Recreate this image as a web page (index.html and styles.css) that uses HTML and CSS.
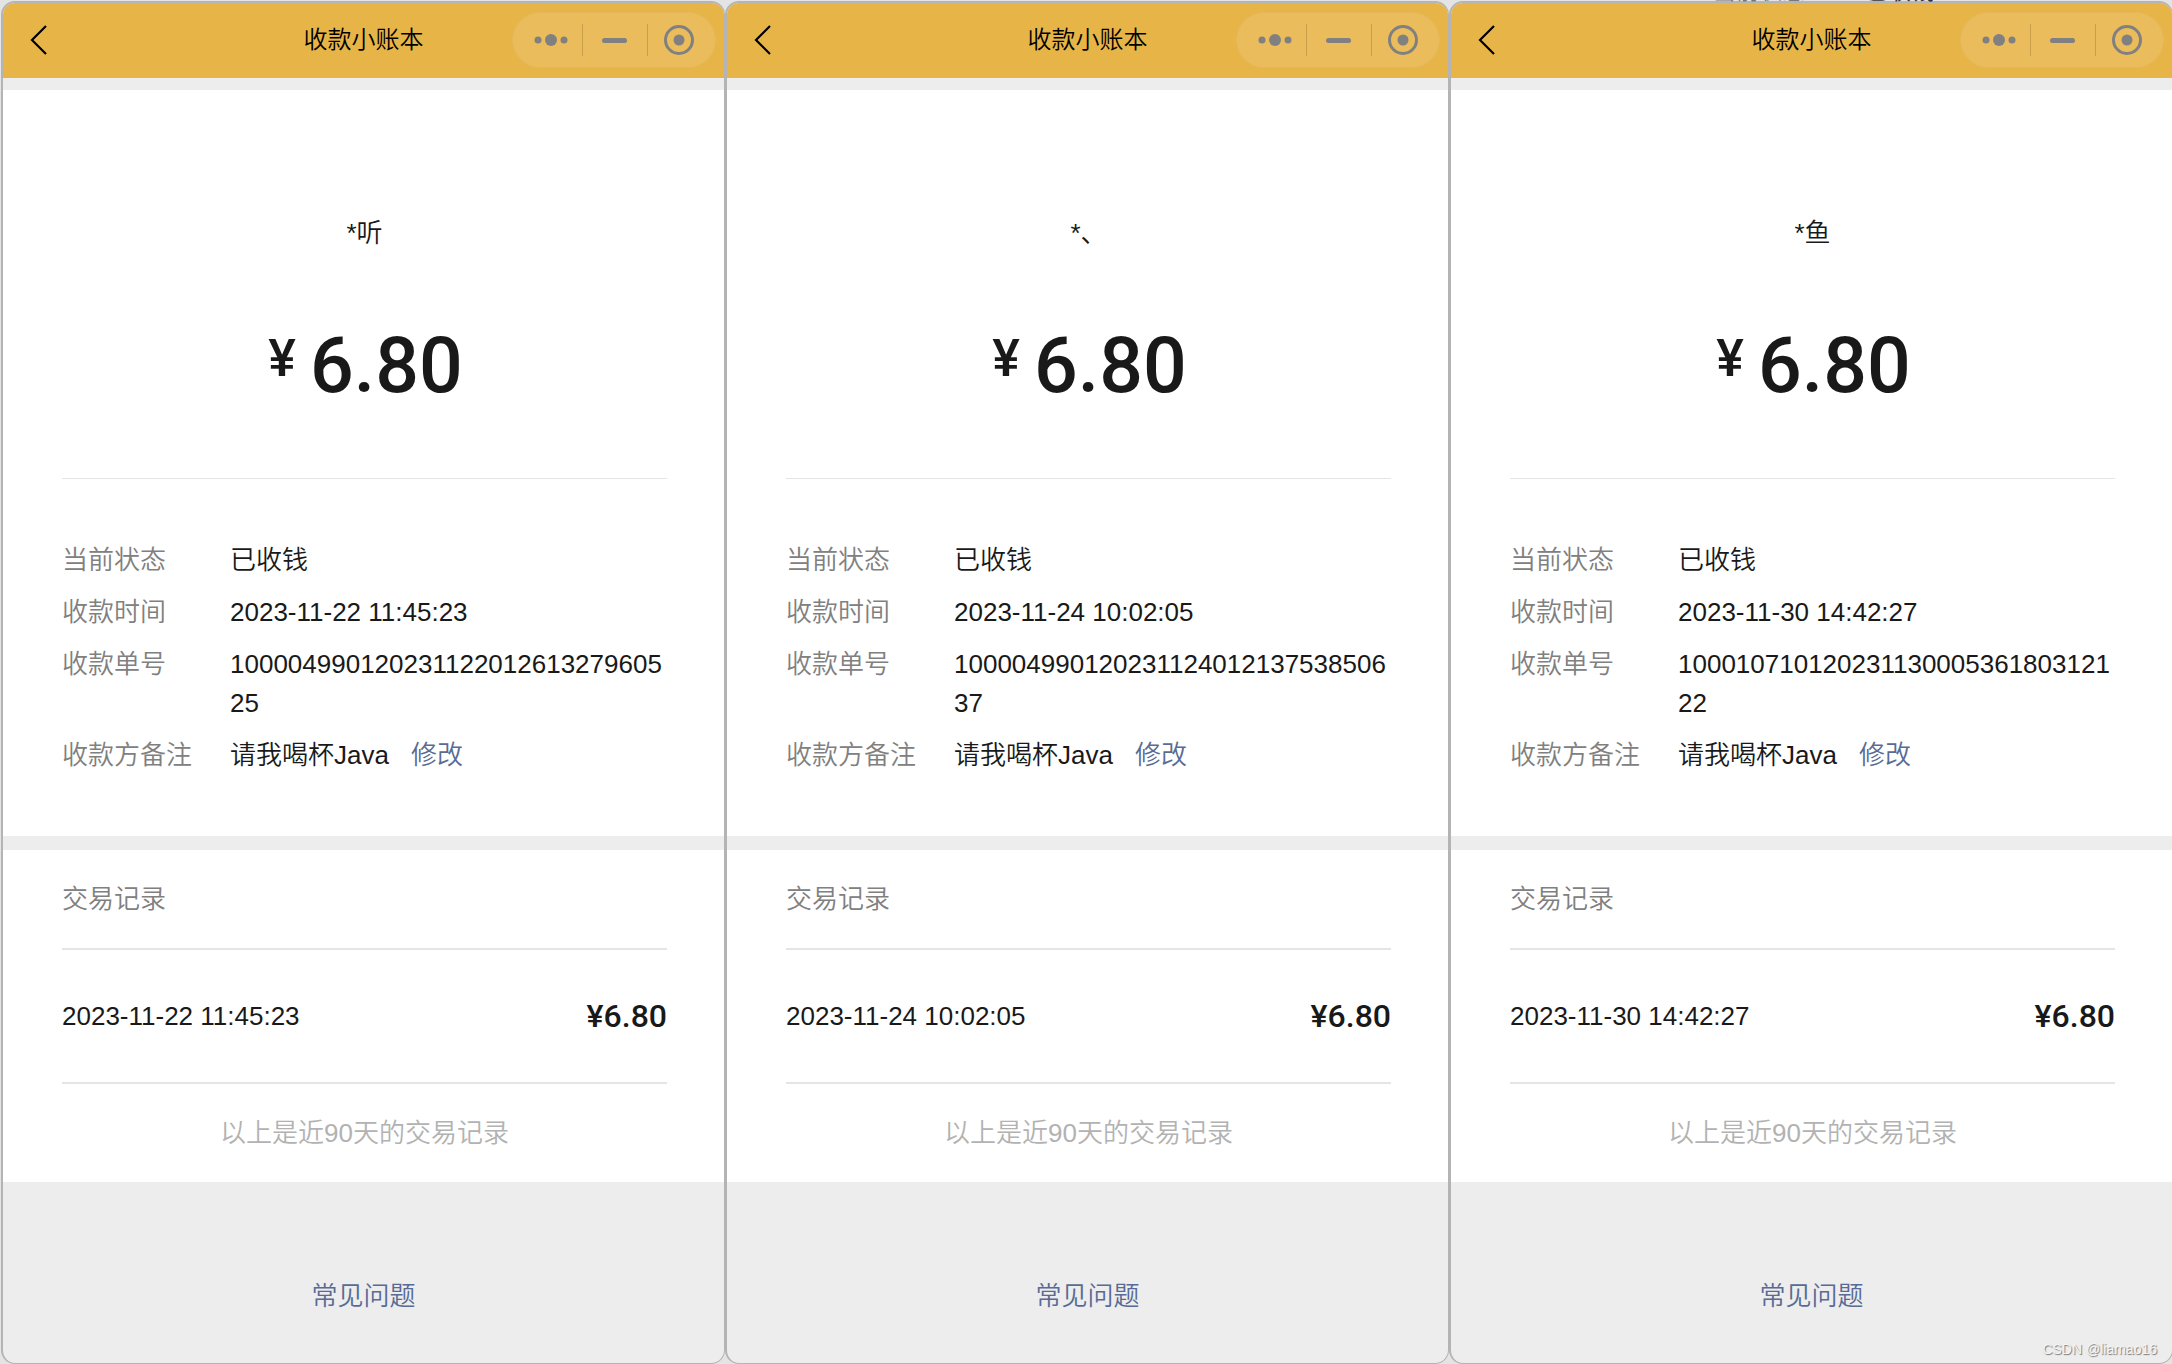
FILE: index.html
```html
<!DOCTYPE html>
<html lang="zh-CN">
<head>
<meta charset="utf-8">
<title>收款小账本</title>
<link rel="stylesheet" href="styles.css">
</head>
<body>
<svg class="symbols" aria-hidden="true">
  <symbol id="back" viewBox="0 0 20 32"><path d="M17 2 3 16 17 30" fill="none" stroke="#000" stroke-width="2.2"/></symbol>
  <symbol id="more" viewBox="0 0 34 32"><g fill="#808080"><circle cx="4" cy="16" r="3.5"/><circle cx="17" cy="16" r="6"/><circle cx="30" cy="16" r="3.5"/></g></symbol>
  <symbol id="minus" viewBox="0 0 34 32"><rect x="4" y="14" width="25" height="5" rx="2.5" fill="#808080"/></symbol>
  <symbol id="close" viewBox="0 0 34 32"><circle cx="16" cy="16" r="13.5" fill="none" stroke="#808080" stroke-width="3"/><circle cx="16" cy="16" r="5.5" fill="#808080"/></symbol>
</svg>
<main class="board">
  <article class="phone">
    <header class="bar">
      <button class="back" type="button" aria-label="返回"><svg><use href="#back"/></svg></button>
      <h1 class="title">收款小账本</h1>
      <div class="capsule">
        <button type="button" aria-label="更多"><svg><use href="#more"/></svg></button>
        <button type="button" aria-label="最小化"><svg><use href="#minus"/></svg></button>
        <button type="button" aria-label="关闭"><svg><use href="#close"/></svg></button>
      </div>
    </header>
    <section class="detail">
      <p class="payer">*听</p>
      <p class="amount"><span class="yen">¥</span><span>6.80</span></p>
      <dl class="facts">
        <dt>当前状态</dt><dd>已收钱</dd>
        <dt>收款时间</dt><dd>2023-11-22 11:45:23</dd>
        <dt>收款单号</dt><dd>10000499012023112201261327960525</dd>
        <dt>收款方备注</dt><dd>请我喝杯Java<a class="edit" href="#edit">修改</a></dd>
      </dl>
    </section>
    <section class="records">
      <h2 class="heading">交易记录</h2>
      <p class="record"><time>2023-11-22 11:45:23</time><span class="sum">¥6.80</span></p>
      <p class="note">以上是近90天的交易记录</p>
    </section>
    <footer class="foot"><a href="#faq">常见问题</a></footer>
  </article>
  <article class="phone">
    <header class="bar">
      <button class="back" type="button" aria-label="返回"><svg><use href="#back"/></svg></button>
      <h1 class="title">收款小账本</h1>
      <div class="capsule">
        <button type="button" aria-label="更多"><svg><use href="#more"/></svg></button>
        <button type="button" aria-label="最小化"><svg><use href="#minus"/></svg></button>
        <button type="button" aria-label="关闭"><svg><use href="#close"/></svg></button>
      </div>
    </header>
    <section class="detail">
      <p class="payer">*、</p>
      <p class="amount"><span class="yen">¥</span><span>6.80</span></p>
      <dl class="facts">
        <dt>当前状态</dt><dd>已收钱</dd>
        <dt>收款时间</dt><dd>2023-11-24 10:02:05</dd>
        <dt>收款单号</dt><dd>10000499012023112401213753850637</dd>
        <dt>收款方备注</dt><dd>请我喝杯Java<a class="edit" href="#edit">修改</a></dd>
      </dl>
    </section>
    <section class="records">
      <h2 class="heading">交易记录</h2>
      <p class="record"><time>2023-11-24 10:02:05</time><span class="sum">¥6.80</span></p>
      <p class="note">以上是近90天的交易记录</p>
    </section>
    <footer class="foot"><a href="#faq">常见问题</a></footer>
  </article>
  <article class="phone">
    <header class="bar">
      <button class="back" type="button" aria-label="返回"><svg><use href="#back"/></svg></button>
      <h1 class="title">收款小账本</h1>
      <div class="capsule">
        <button type="button" aria-label="更多"><svg><use href="#more"/></svg></button>
        <button type="button" aria-label="最小化"><svg><use href="#minus"/></svg></button>
        <button type="button" aria-label="关闭"><svg><use href="#close"/></svg></button>
      </div>
    </header>
    <section class="detail">
      <p class="payer">*鱼</p>
      <p class="amount"><span class="yen">¥</span><span>6.80</span></p>
      <dl class="facts">
        <dt>当前状态</dt><dd>已收钱</dd>
        <dt>收款时间</dt><dd>2023-11-30 14:42:27</dd>
        <dt>收款单号</dt><dd>10001071012023113000536180312122</dd>
        <dt>收款方备注</dt><dd>请我喝杯Java<a class="edit" href="#edit">修改</a></dd>
      </dl>
    </section>
    <section class="records">
      <h2 class="heading">交易记录</h2>
      <p class="record"><time>2023-11-30 14:42:27</time><span class="sum">¥6.80</span></p>
      <p class="note">以上是近90天的交易记录</p>
    </section>
    <footer class="foot"><a href="#faq">常见问题</a></footer>
  </article>
</main>
<div class="behind" aria-hidden="true"><span>当前状态</span><b>已收钱</b></div>
<p class="watermark">CSDN @liamao16</p>
</body>
</html>
```
FILE: styles.css
```css
* { box-sizing: border-box; margin: 0; padding: 0; }

html { overflow-x: clip; }

body {
  background: #e4e4e4;
  color: #191919;
  font: 350 26px/39px "Liberation Sans", "Noto Sans CJK SC", sans-serif;
}

a { color: #576b95; text-decoration: none; }
button { border: 0; background: none; font: inherit; }
.symbols { display: none; }

.board {
  display: grid;
  grid-template-columns: repeat(3, 1fr);
  min-height: 100vh;
  margin-right: -1px;
  padding: 1px 0 0 1px;
}

.phone {
  display: flex;
  flex-direction: column;
  overflow: hidden;
  border: 2px solid #b4b4b4;
  border-right-width: 1px;
  border-bottom-width: 1px;
  border-radius: 14px;
  background: #ededed;
}

.bar {
  display: grid;
  grid-template-columns: 1fr auto 1fr;
  align-items: center;
  height: 75px;
  padding: 0 8px 2px 26px;
  background: #e7b547;
}

.back { justify-self: start; width: 20px; height: 32px; }
.back svg { display: block; width: 20px; height: 32px; }
.title { padding-right: 18px; font-size: 24px; font-weight: 350; color: #000; }

.capsule {
  display: flex;
  align-items: center;
  justify-self: end;
  width: 204px;
  height: 56px;
  border: 1px solid #e4b85a;
  border-radius: 28px;
  background: #eabc5b;
}
.capsule button { display: flex; justify-content: center; width: 65px; height: 32px; }
.capsule button:first-child { width: 69px; padding-left: 6px; }
.capsule button + button { border-left: 1px solid #c9a04a; }
.capsule svg { width: 34px; height: 32px; }

.detail {
  margin-top: 12px;
  padding: 124px 57px 61px 59px;
  background: #fff;
}

.payer { text-align: center; }

.amount {
  display: flex;
  justify-content: center;
  gap: 14px;
  height: 226px;
  padding: 66px 0 0 2px;
  border-bottom: 1px solid #e5e5e5;
  font: 500 77px/94px Roboto, sans-serif;
}
.yen { font-size: 52px; line-height: 80px; }

.facts {
  display: grid;
  grid-template-columns: 144px 1fr;
  gap: 13px 24px;
  padding-top: 62px;
}
.facts dt { color: #808080; white-space: nowrap; }
.facts dd { word-break: break-all; }
.edit { margin-left: 22px; }

.records {
  margin-top: 14px;
  padding: 0 57px 0 59px;
  background: #fff;
}
.heading { padding: 30px 0 29px; font-size: 26px; font-weight: 350; color: #808080; }
.record {
  display: flex;
  align-items: center;
  justify-content: space-between;
  height: 136px;
  border: solid #e5e5e5;
  border-width: 2px 0;
}
.sum { font: 500 32px/39px Roboto, sans-serif; }
.note { padding: 30px 0 29px; text-align: center; color: #b2b2b2; }

.foot { padding: 95px 0 40px; text-align: center; }

/* Sliver of the window that lies under the third phone */
.behind {
  position: absolute;
  top: 0;
  right: 238px;
  display: flex;
  align-items: flex-end;
  gap: 60px;
  height: 3px;
  overflow: hidden;
  color: #777;
  font-size: 23px;
  line-height: 24px;
}
.behind b { color: #333; font-weight: 400; }

.watermark {
  position: absolute;
  right: 15px;
  bottom: 5px;
  color: #f4f4f4;
  font-size: 14px;
  line-height: 20px;
  text-shadow: 1px 1px 1px #777;
}
```
